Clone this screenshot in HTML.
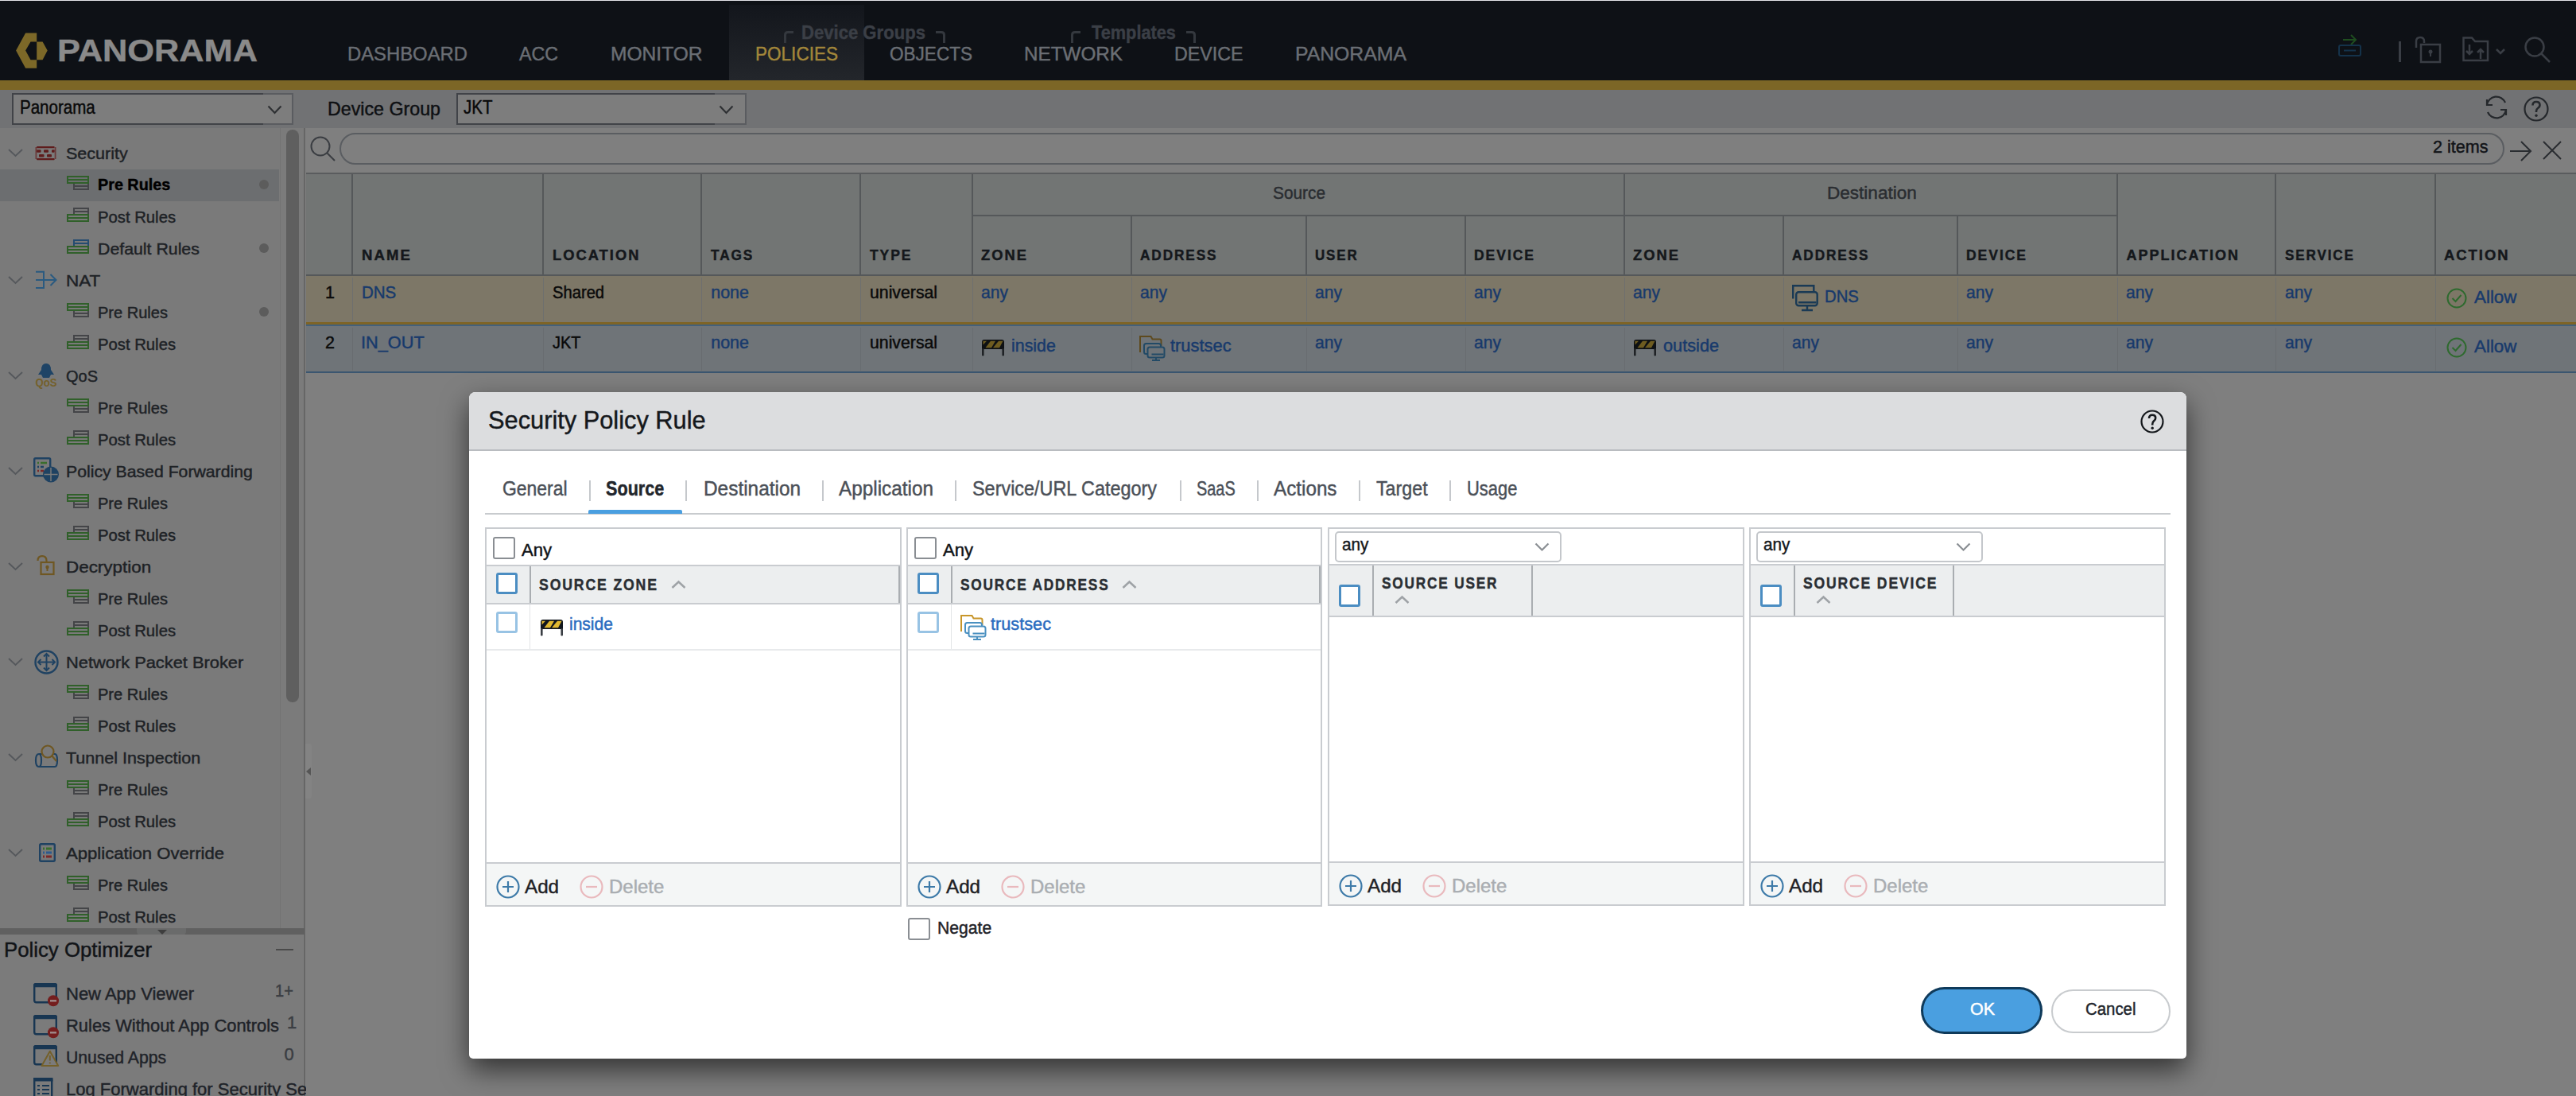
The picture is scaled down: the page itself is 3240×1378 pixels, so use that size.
<!DOCTYPE html><html><head><meta charset="utf-8"><style>
html,body{margin:0;padding:0;width:3240px;height:1378px;overflow:hidden;background:#7f7f7f;}
body{position:relative;font-family:"Liberation Sans", sans-serif;}
.t{position:absolute;line-height:1;white-space:nowrap;-webkit-text-stroke:0.45px currentColor;}
svg{overflow:visible}
</style></head><body>
<div style="position:absolute;left:0px;top:0px;width:3240px;height:101px;background:#0e1116"></div>
<div style="position:absolute;left:0px;top:0px;width:3240px;height:1px;background:#e6e5ea"></div>
<div style="position:absolute;left:917px;top:6px;width:170px;height:95px;background:linear-gradient(#13161c,#23262b)"></div>
<svg style="position:absolute;left:0px;top:0px" width="80" height="100" viewBox="0 0 80 100"><path d="M32.1 41.6 H46.2 V52.4 H38.5 L32.1 63.6 L38.5 75.3 H46.2 V85.8 H32.1 L20.1 63.6 Z M46.2 52.4 H53.6 L59.7 63.6 L53.6 75.3 H46.2 Z" fill="#7c6828"/></svg>
<div class="t" style="left:72.0px;top:45.4px;font-size:38px;color:#8a8a8a;font-weight:bold;letter-spacing:0px;transform:scaleX(1.1403);transform-origin:0 0;">PANORAMA</div>
<div class="t" style="left:437.0px;top:56.3px;font-size:24.5px;color:#6a6e74;font-weight:normal;letter-spacing:0px;transform:scaleX(0.9726);transform-origin:0 0;">DASHBOARD</div>
<div class="t" style="left:653.4px;top:56.3px;font-size:24.5px;color:#6a6e74;font-weight:normal;letter-spacing:0px;transform:scaleX(0.9469);transform-origin:0 0;">ACC</div>
<div class="t" style="left:768.4px;top:56.3px;font-size:24.5px;color:#6a6e74;font-weight:normal;letter-spacing:0px;transform:scaleX(1.0030);transform-origin:0 0;">MONITOR</div>
<div class="t" style="left:1119.0px;top:56.3px;font-size:24.5px;color:#6a6e74;font-weight:normal;letter-spacing:0px;transform:scaleX(0.9204);transform-origin:0 0;">OBJECTS</div>
<div class="t" style="left:1288.0px;top:56.3px;font-size:24.5px;color:#6a6e74;font-weight:normal;letter-spacing:0px;transform:scaleX(0.9900);transform-origin:0 0;">NETWORK</div>
<div class="t" style="left:1477.0px;top:56.3px;font-size:24.5px;color:#6a6e74;font-weight:normal;letter-spacing:0px;transform:scaleX(0.9490);transform-origin:0 0;">DEVICE</div>
<div class="t" style="left:1628.8px;top:56.3px;font-size:24.5px;color:#6a6e74;font-weight:normal;letter-spacing:0px;transform:scaleX(1.0108);transform-origin:0 0;">PANORAMA</div>
<div class="t" style="left:949.8px;top:56.3px;font-size:24.5px;color:#a3873a;font-weight:normal;letter-spacing:0px;transform:scaleX(0.9204);transform-origin:0 0;">POLICIES</div>
<div class="t" style="left:1007.7px;top:28.7px;font-size:24px;color:#3b3f46;font-weight:bold;letter-spacing:0px;transform:scaleX(0.9204);transform-origin:0 0;">Device Groups</div>
<div class="t" style="left:1372.6px;top:28.7px;font-size:24px;color:#3b3f46;font-weight:bold;letter-spacing:0px;transform:scaleX(0.9060);transform-origin:0 0;">Templates</div>
<svg style="position:absolute;left:986px;top:39px" width="13" height="15" viewBox="0 0 13 15"><path d="M1.5 15 V5 Q1.5 1.5 5 1.5 H12" stroke="#34383e" stroke-width="3" fill="none"/></svg>
<svg style="position:absolute;left:1347px;top:39px" width="13" height="15" viewBox="0 0 13 15"><path d="M1.5 15 V5 Q1.5 1.5 5 1.5 H12" stroke="#34383e" stroke-width="3" fill="none"/></svg>
<svg style="position:absolute;left:1176px;top:39px" width="13" height="15" viewBox="0 0 13 15"><path d="M1 1.5 H8 Q11.5 1.5 11.5 5 V15" stroke="#34383e" stroke-width="3" fill="none"/></svg>
<svg style="position:absolute;left:1491px;top:39px" width="13" height="15" viewBox="0 0 13 15"><path d="M1 1.5 H8 Q11.5 1.5 11.5 5 V15" stroke="#34383e" stroke-width="3" fill="none"/></svg>
<svg style="position:absolute;left:2941px;top:42px" width="30" height="30" viewBox="0 0 30 30"><path d="M6 8 H22 M16 2 L22 8 L16 14" stroke="#1f4d1f" stroke-width="2" fill="none"/><rect x="1" y="15" width="27" height="13" rx="2" stroke="#14324a" stroke-width="2" fill="none"/><path d="M7 21.5 H22" stroke="#14324a" stroke-width="2"/></svg>
<div style="position:absolute;left:3017px;top:52px;width:3px;height:26px;background:#3a3e45"></div>
<svg style="position:absolute;left:3037px;top:46px" width="34" height="34" viewBox="0 0 34 34"><path d="M2 14 V6 Q2 1 7 1 Q12 1 12 6 V8" stroke="#3a3e45" stroke-width="2.5" fill="none"/><rect x="8" y="10" width="24" height="22" stroke="#3a3e45" stroke-width="2.5" fill="none"/><circle cx="20" cy="19" r="2.5" fill="#3a3e45"/><rect x="19" y="19" width="2" height="6" fill="#3a3e45"/></svg>
<svg style="position:absolute;left:3097px;top:46px" width="56" height="32" viewBox="0 0 56 32"><path d="M1.5 30 V1.5 H12 L16 6 H32 V30 Z" stroke="#3a3e45" stroke-width="2.5" fill="none"/><path d="M9 10 V22 M5 18 L9 22 L13 18 M23 28 V16 M19 20 L23 16 L27 20" stroke="#3a3e45" stroke-width="2.5" fill="none"/><path d="M43 16 L48 21 L53 16" stroke="#3a3e45" stroke-width="2.5" fill="none"/></svg>
<svg style="position:absolute;left:3175px;top:46px" width="34" height="34" viewBox="0 0 34 34"><circle cx="13" cy="13" r="11.5" stroke="#3a3e45" stroke-width="2.5" fill="none"/><path d="M21 21 L32 32" stroke="#3a3e45" stroke-width="2.5"/></svg>
<div style="position:absolute;left:0px;top:101px;width:3240px;height:12px;background:#7c6626"></div>
<div style="position:absolute;left:0px;top:113px;width:3240px;height:48px;background:#717274"></div>
<div style="position:absolute;left:15px;top:117px;width:354px;height:40px;background:#7d7d7d;border:2px solid #414348;box-sizing:border-box"></div>
<div style="position:absolute;left:331px;top:117px;width:38px;height:40px;border:2px solid #5a5c60;border-left:none;box-sizing:border-box"></div>
<div class="t" style="left:24.8px;top:124.0px;font-size:23px;color:#0a0a0a;font-weight:normal;letter-spacing:0px;transform:scaleX(0.8922);transform-origin:0 0;">Panorama</div>
<svg style="position:absolute;left:336px;top:132px" width="20" height="12" viewBox="0 0 20 12"><path d="M1.5 1.5 L9.5 10 L17.5 1.5" stroke="#2e3033" stroke-width="2.2" fill="none"/></svg>
<div class="t" style="left:412.4px;top:124.7px;font-size:24px;color:#0e1013;font-weight:normal;letter-spacing:0px;transform:scaleX(0.9676);transform-origin:0 0;">Device Group</div>
<div style="position:absolute;left:574px;top:117px;width:365px;height:40px;background:#7d7d7d;border:2px solid #414348;box-sizing:border-box"></div>
<div style="position:absolute;left:899px;top:117px;width:40px;height:40px;border:2px solid #5a5c60;border-left:none;box-sizing:border-box"></div>
<div class="t" style="left:583.0px;top:124.0px;font-size:23px;color:#0a0a0a;font-weight:normal;letter-spacing:0px;transform:scaleX(0.8927);transform-origin:0 0;">JKT</div>
<svg style="position:absolute;left:904px;top:132px" width="20" height="12" viewBox="0 0 20 12"><path d="M1.5 1.5 L9.5 10 L17.5 1.5" stroke="#2e3033" stroke-width="2.2" fill="none"/></svg>
<svg style="position:absolute;left:3125px;top:120px" width="30" height="30" viewBox="0 0 30 30"><path d="M3 12 A12 12 0 0 1 26 9 M27 18 A12 12 0 0 1 4 21" stroke="#25282c" stroke-width="2.2" fill="none"/><path d="M3 5 V12 H10 M27 25 V18 H20" stroke="#25282c" stroke-width="2.2" fill="none"/></svg>
<svg style="position:absolute;left:3174px;top:121px" width="32" height="32" viewBox="0 0 32 32"><circle cx="16" cy="16" r="14.5" stroke="#25282c" stroke-width="2.2" fill="none"/><path d="M11.5 11.5 Q11.5 7 16 7 Q20.5 7 20.5 11 Q20.5 13.5 18 15 Q16 16.3 16 19 V20" stroke="#25282c" stroke-width="2.6" fill="none"/><circle cx="16" cy="24.3" r="1.7" fill="#25282c"/></svg>
<div style="position:absolute;left:0px;top:161px;width:352px;height:1007px;background:#7a7a7a"></div>
<div style="position:absolute;left:352px;top:161px;width:31px;height:1007px;background:#7b7b7b"></div>
<div style="position:absolute;left:352px;top:161px;width:1px;height:1007px;background:#727272"></div>
<div style="position:absolute;left:360px;top:163px;width:16px;height:720px;background:#5f5f5f;border-radius:8px"></div>
<div style="position:absolute;left:382px;top:161px;width:2px;height:1217px;background:#666"></div>
<div style="position:absolute;left:0px;top:213px;width:351px;height:40px;background:#6c6e70"></div>
<svg style="position:absolute;left:10px;top:187px" width="19" height="10" viewBox="0 0 19 10"><path d="M1 1 L9.5 9 L18 1" stroke="#55585c" stroke-width="1.8" fill="none"/></svg>
<svg style="position:absolute;left:44px;top:183px" width="27" height="20" viewBox="0 0 27 20"><g fill="#5e1c1c"><rect x="2" y="1" width="22.7" height="2.3" rx="1"/><rect x="2" y="16" width="22.7" height="2.3" rx="1"/><rect x="2" y="5.3" width="5.5" height="3.5" rx="1"/><rect x="11" y="5.3" width="6" height="3.5" rx="1"/><rect x="21" y="5.3" width="3.7" height="3.5" rx="1"/><rect x="5" y="11" width="6.5" height="3.5" rx="1"/><rect x="15" y="11" width="6" height="3.5" rx="1"/></g><rect x="0.5" y="2" width="1.8" height="15" fill="#6a3a3a"/><rect x="24.7" y="2" width="1.8" height="15" fill="#6a3a3a"/></svg>
<div class="t" style="left:83.2px;top:181.6px;font-size:21px;color:#1e2226;font-weight:normal;letter-spacing:0px;transform:scaleX(1.0257);transform-origin:0 0;">Security</div>
<svg style="position:absolute;left:84px;top:221px" width="28" height="18" viewBox="0 0 28 18"><rect x="9" y="9" width="18" height="8" stroke="#444548" stroke-width="2" fill="none"/><path d="M8 13 H28" stroke="#444548" stroke-width="2"/><rect x="1" y="1" width="26" height="8" stroke="#30602a" stroke-width="2" fill="none"/><path d="M0 5 H28" stroke="#30602a" stroke-width="2"/></svg>
<div class="t" style="left:122.7px;top:221.4px;font-size:21px;color:#000;font-weight:bold;letter-spacing:0px;transform:scaleX(0.9412);transform-origin:0 0;">Pre Rules</div>
<div style="position:absolute;left:326px;top:226px;width:12px;height:12px;background:#5c5c5c;border-radius:50%"></div>
<svg style="position:absolute;left:84px;top:261px" width="28" height="18" viewBox="0 0 28 18"><rect x="9" y="1" width="18" height="8" stroke="#444548" stroke-width="2" fill="none"/><path d="M8 5 H28" stroke="#444548" stroke-width="2"/><rect x="1" y="9" width="26" height="8" stroke="#30602a" stroke-width="2" fill="none"/><path d="M0 13 H28" stroke="#30602a" stroke-width="2"/></svg>
<div class="t" style="left:123.0px;top:261.6px;font-size:21px;color:#1e2226;font-weight:normal;letter-spacing:0px;transform:scaleX(0.9655);transform-origin:0 0;">Post Rules</div>
<svg style="position:absolute;left:84px;top:301px" width="28" height="18" viewBox="0 0 28 18"><rect x="9" y="1" width="18" height="8" stroke="#254c70" stroke-width="2" fill="none"/><path d="M8 5 H28" stroke="#254c70" stroke-width="2"/><rect x="1" y="9" width="26" height="8" stroke="#30602a" stroke-width="2" fill="none"/><path d="M0 13 H28" stroke="#30602a" stroke-width="2"/></svg>
<div class="t" style="left:123.0px;top:301.6px;font-size:21px;color:#1e2226;font-weight:normal;letter-spacing:0px;transform:scaleX(1.0143);transform-origin:0 0;">Default Rules</div>
<div style="position:absolute;left:326px;top:306px;width:12px;height:12px;background:#5c5c5c;border-radius:50%"></div>
<svg style="position:absolute;left:10px;top:347px" width="19" height="10" viewBox="0 0 19 10"><path d="M1 1 L9.5 9 L18 1" stroke="#55585c" stroke-width="1.8" fill="none"/></svg>
<svg style="position:absolute;left:44px;top:340px" width="28" height="24" viewBox="0 0 28 24"><path d="M1 1.8 H11 V22 H1 M1 12 H26 M19.5 5 L26.5 12 L19.5 19" stroke="#2a5a80" stroke-width="2" fill="none"/></svg>
<div class="t" style="left:83.2px;top:341.6px;font-size:21px;color:#1e2226;font-weight:normal;letter-spacing:0px;transform:scaleX(1.0716);transform-origin:0 0;">NAT</div>
<svg style="position:absolute;left:84px;top:381px" width="28" height="18" viewBox="0 0 28 18"><rect x="9" y="9" width="18" height="8" stroke="#444548" stroke-width="2" fill="none"/><path d="M8 13 H28" stroke="#444548" stroke-width="2"/><rect x="1" y="1" width="26" height="8" stroke="#30602a" stroke-width="2" fill="none"/><path d="M0 5 H28" stroke="#30602a" stroke-width="2"/></svg>
<div class="t" style="left:123.0px;top:381.6px;font-size:21px;color:#1e2226;font-weight:normal;letter-spacing:0px;transform:scaleX(0.9539);transform-origin:0 0;">Pre Rules</div>
<div style="position:absolute;left:326px;top:386px;width:12px;height:12px;background:#5c5c5c;border-radius:50%"></div>
<svg style="position:absolute;left:84px;top:421px" width="28" height="18" viewBox="0 0 28 18"><rect x="9" y="1" width="18" height="8" stroke="#444548" stroke-width="2" fill="none"/><path d="M8 5 H28" stroke="#444548" stroke-width="2"/><rect x="1" y="9" width="26" height="8" stroke="#30602a" stroke-width="2" fill="none"/><path d="M0 13 H28" stroke="#30602a" stroke-width="2"/></svg>
<div class="t" style="left:123.0px;top:421.6px;font-size:21px;color:#1e2226;font-weight:normal;letter-spacing:0px;transform:scaleX(0.9655);transform-origin:0 0;">Post Rules</div>
<svg style="position:absolute;left:10px;top:467px" width="19" height="10" viewBox="0 0 19 10"><path d="M1 1 L9.5 9 L18 1" stroke="#55585c" stroke-width="1.8" fill="none"/></svg>
<svg style="position:absolute;left:44px;top:456px" width="28" height="31" viewBox="0 0 28 31"><path d="M8 9 Q8 1 14 1 Q20 1 20 9 L24 15 H4 Z" fill="#1f4466"/><path d="M8 15 L10 19 H18 L20 15 Z" fill="#1f4466"/><text x="14" y="29.5" font-size="14" font-weight="bold" text-anchor="middle" fill="#74602a" font-family="Liberation Sans" textLength="27" lengthAdjust="spacingAndGlyphs">QoS</text></svg>
<div class="t" style="left:83.2px;top:461.6px;font-size:21px;color:#1e2226;font-weight:normal;letter-spacing:0px;transform:scaleX(0.9524);transform-origin:0 0;">QoS</div>
<svg style="position:absolute;left:84px;top:501px" width="28" height="18" viewBox="0 0 28 18"><rect x="9" y="9" width="18" height="8" stroke="#444548" stroke-width="2" fill="none"/><path d="M8 13 H28" stroke="#444548" stroke-width="2"/><rect x="1" y="1" width="26" height="8" stroke="#30602a" stroke-width="2" fill="none"/><path d="M0 5 H28" stroke="#30602a" stroke-width="2"/></svg>
<div class="t" style="left:123.0px;top:501.6px;font-size:21px;color:#1e2226;font-weight:normal;letter-spacing:0px;transform:scaleX(0.9539);transform-origin:0 0;">Pre Rules</div>
<svg style="position:absolute;left:84px;top:541px" width="28" height="18" viewBox="0 0 28 18"><rect x="9" y="1" width="18" height="8" stroke="#444548" stroke-width="2" fill="none"/><path d="M8 5 H28" stroke="#444548" stroke-width="2"/><rect x="1" y="9" width="26" height="8" stroke="#30602a" stroke-width="2" fill="none"/><path d="M0 13 H28" stroke="#30602a" stroke-width="2"/></svg>
<div class="t" style="left:123.0px;top:541.6px;font-size:21px;color:#1e2226;font-weight:normal;letter-spacing:0px;transform:scaleX(0.9655);transform-origin:0 0;">Post Rules</div>
<svg style="position:absolute;left:10px;top:587px" width="19" height="10" viewBox="0 0 19 10"><path d="M1 1 L9.5 9 L18 1" stroke="#55585c" stroke-width="1.8" fill="none"/></svg>
<svg style="position:absolute;left:42px;top:575px" width="33" height="32" viewBox="0 0 33 32"><rect x="1.2" y="1.2" width="20" height="22" rx="1.5" stroke="#1f4262" stroke-width="2.4" fill="none"/><path d="M5 7 H7 M9 7 H17" stroke="#3a6e2c" stroke-width="2.5"/><path d="M5 12 H7 M9 12 H13" stroke="#1f4262" stroke-width="2.5"/><path d="M5 17 H7 M9 17 H13" stroke="#7a2828" stroke-width="2.5"/><circle cx="22" cy="21.5" r="10" fill="#1f4262"/><path d="M22 13 V30 M13.5 21.5 H30.5" stroke="#7a7a7a" stroke-width="1.5"/></svg>
<div class="t" style="left:83.2px;top:581.6px;font-size:21px;color:#1e2226;font-weight:normal;letter-spacing:0px;transform:scaleX(1.0110);transform-origin:0 0;">Policy Based Forwarding</div>
<svg style="position:absolute;left:84px;top:621px" width="28" height="18" viewBox="0 0 28 18"><rect x="9" y="9" width="18" height="8" stroke="#444548" stroke-width="2" fill="none"/><path d="M8 13 H28" stroke="#444548" stroke-width="2"/><rect x="1" y="1" width="26" height="8" stroke="#30602a" stroke-width="2" fill="none"/><path d="M0 5 H28" stroke="#30602a" stroke-width="2"/></svg>
<div class="t" style="left:123.0px;top:621.6px;font-size:21px;color:#1e2226;font-weight:normal;letter-spacing:0px;transform:scaleX(0.9539);transform-origin:0 0;">Pre Rules</div>
<svg style="position:absolute;left:84px;top:661px" width="28" height="18" viewBox="0 0 28 18"><rect x="9" y="1" width="18" height="8" stroke="#444548" stroke-width="2" fill="none"/><path d="M8 5 H28" stroke="#444548" stroke-width="2"/><rect x="1" y="9" width="26" height="8" stroke="#30602a" stroke-width="2" fill="none"/><path d="M0 13 H28" stroke="#30602a" stroke-width="2"/></svg>
<div class="t" style="left:123.0px;top:661.6px;font-size:21px;color:#1e2226;font-weight:normal;letter-spacing:0px;transform:scaleX(0.9655);transform-origin:0 0;">Post Rules</div>
<svg style="position:absolute;left:10px;top:707px" width="19" height="10" viewBox="0 0 19 10"><path d="M1 1 L9.5 9 L18 1" stroke="#55585c" stroke-width="1.8" fill="none"/></svg>
<svg style="position:absolute;left:46px;top:698px" width="23" height="26" viewBox="0 0 23 26"><path d="M1.5 7 Q1.5 1.2 7 1.2 Q12.5 1.2 12.5 7 V9" stroke="#6f5722" stroke-width="2.2" fill="none"/><rect x="5.5" y="9" width="16" height="15" stroke="#6f5722" stroke-width="2.2" fill="none"/><circle cx="13.5" cy="15" r="2.2" fill="#6f5722"/><rect x="12.5" y="15" width="2" height="5" fill="#6f5722"/></svg>
<div class="t" style="left:83.2px;top:701.6px;font-size:21px;color:#1e2226;font-weight:normal;letter-spacing:0px;transform:scaleX(1.0677);transform-origin:0 0;">Decryption</div>
<svg style="position:absolute;left:84px;top:741px" width="28" height="18" viewBox="0 0 28 18"><rect x="9" y="9" width="18" height="8" stroke="#444548" stroke-width="2" fill="none"/><path d="M8 13 H28" stroke="#444548" stroke-width="2"/><rect x="1" y="1" width="26" height="8" stroke="#30602a" stroke-width="2" fill="none"/><path d="M0 5 H28" stroke="#30602a" stroke-width="2"/></svg>
<div class="t" style="left:123.0px;top:741.6px;font-size:21px;color:#1e2226;font-weight:normal;letter-spacing:0px;transform:scaleX(0.9539);transform-origin:0 0;">Pre Rules</div>
<svg style="position:absolute;left:84px;top:781px" width="28" height="18" viewBox="0 0 28 18"><rect x="9" y="1" width="18" height="8" stroke="#444548" stroke-width="2" fill="none"/><path d="M8 5 H28" stroke="#444548" stroke-width="2"/><rect x="1" y="9" width="26" height="8" stroke="#30602a" stroke-width="2" fill="none"/><path d="M0 13 H28" stroke="#30602a" stroke-width="2"/></svg>
<div class="t" style="left:123.0px;top:781.6px;font-size:21px;color:#1e2226;font-weight:normal;letter-spacing:0px;transform:scaleX(0.9655);transform-origin:0 0;">Post Rules</div>
<svg style="position:absolute;left:10px;top:827px" width="19" height="10" viewBox="0 0 19 10"><path d="M1 1 L9.5 9 L18 1" stroke="#55585c" stroke-width="1.8" fill="none"/></svg>
<svg style="position:absolute;left:43px;top:817px" width="31" height="31" viewBox="0 0 31 31"><circle cx="15.5" cy="15.5" r="14" stroke="#1f4262" stroke-width="2.4" fill="none"/><path d="M15.5 5 V26 M5 15.5 H26" stroke="#1f4262" stroke-width="2" fill="none"/><path d="M12 8.5 L15.5 5 L19 8.5 M12 22.5 L15.5 26 L19 22.5 M8.5 12 L5 15.5 L8.5 19 M22.5 12 L26 15.5 L22.5 19" stroke="#1f4262" stroke-width="2" fill="none"/></svg>
<div class="t" style="left:83.2px;top:821.6px;font-size:21px;color:#1e2226;font-weight:normal;letter-spacing:0px;transform:scaleX(1.0398);transform-origin:0 0;">Network Packet Broker</div>
<svg style="position:absolute;left:84px;top:861px" width="28" height="18" viewBox="0 0 28 18"><rect x="9" y="9" width="18" height="8" stroke="#444548" stroke-width="2" fill="none"/><path d="M8 13 H28" stroke="#444548" stroke-width="2"/><rect x="1" y="1" width="26" height="8" stroke="#30602a" stroke-width="2" fill="none"/><path d="M0 5 H28" stroke="#30602a" stroke-width="2"/></svg>
<div class="t" style="left:123.0px;top:861.6px;font-size:21px;color:#1e2226;font-weight:normal;letter-spacing:0px;transform:scaleX(0.9539);transform-origin:0 0;">Pre Rules</div>
<svg style="position:absolute;left:84px;top:901px" width="28" height="18" viewBox="0 0 28 18"><rect x="9" y="1" width="18" height="8" stroke="#444548" stroke-width="2" fill="none"/><path d="M8 5 H28" stroke="#444548" stroke-width="2"/><rect x="1" y="9" width="26" height="8" stroke="#30602a" stroke-width="2" fill="none"/><path d="M0 13 H28" stroke="#30602a" stroke-width="2"/></svg>
<div class="t" style="left:123.0px;top:901.6px;font-size:21px;color:#1e2226;font-weight:normal;letter-spacing:0px;transform:scaleX(0.9655);transform-origin:0 0;">Post Rules</div>
<svg style="position:absolute;left:10px;top:947px" width="19" height="10" viewBox="0 0 19 10"><path d="M1 1 L9.5 9 L18 1" stroke="#55585c" stroke-width="1.8" fill="none"/></svg>
<svg style="position:absolute;left:43px;top:936px" width="31" height="30" viewBox="0 0 31 30"><path d="M6 12 H26 Q29 12 29 20 Q29 28 26 28 H6 Q2 28 2 20 Q2 12 6 12 Z M6 12 Q9 12 9 20 Q9 28 6 28" stroke="#1f4262" stroke-width="2.2" fill="none"/><circle cx="17" cy="9" r="7.5" stroke="#6f5722" stroke-width="2.2" fill="#7a7a7a"/><path d="M22 14 L28 21" stroke="#6f5722" stroke-width="2.2"/></svg>
<div class="t" style="left:83.2px;top:941.6px;font-size:21px;color:#1e2226;font-weight:normal;letter-spacing:0px;transform:scaleX(1.0261);transform-origin:0 0;">Tunnel Inspection</div>
<svg style="position:absolute;left:84px;top:981px" width="28" height="18" viewBox="0 0 28 18"><rect x="9" y="9" width="18" height="8" stroke="#444548" stroke-width="2" fill="none"/><path d="M8 13 H28" stroke="#444548" stroke-width="2"/><rect x="1" y="1" width="26" height="8" stroke="#30602a" stroke-width="2" fill="none"/><path d="M0 5 H28" stroke="#30602a" stroke-width="2"/></svg>
<div class="t" style="left:123.0px;top:981.6px;font-size:21px;color:#1e2226;font-weight:normal;letter-spacing:0px;transform:scaleX(0.9539);transform-origin:0 0;">Pre Rules</div>
<svg style="position:absolute;left:84px;top:1021px" width="28" height="18" viewBox="0 0 28 18"><rect x="9" y="1" width="18" height="8" stroke="#444548" stroke-width="2" fill="none"/><path d="M8 5 H28" stroke="#444548" stroke-width="2"/><rect x="1" y="9" width="26" height="8" stroke="#30602a" stroke-width="2" fill="none"/><path d="M0 13 H28" stroke="#30602a" stroke-width="2"/></svg>
<div class="t" style="left:123.0px;top:1021.6px;font-size:21px;color:#1e2226;font-weight:normal;letter-spacing:0px;transform:scaleX(0.9655);transform-origin:0 0;">Post Rules</div>
<svg style="position:absolute;left:10px;top:1067px" width="19" height="10" viewBox="0 0 19 10"><path d="M1 1 L9.5 9 L18 1" stroke="#55585c" stroke-width="1.8" fill="none"/></svg>
<svg style="position:absolute;left:49px;top:1060px" width="21" height="24" viewBox="0 0 21 24"><rect x="1.2" y="1.2" width="18.6" height="21.6" rx="1.5" stroke="#1f4262" stroke-width="2.4" fill="none"/><path d="M5 7 H7 M9 7 H16" stroke="#3a6e2c" stroke-width="2.8"/><path d="M5 12 H7 M9 12 H16" stroke="#2c5a8e" stroke-width="2.8"/><path d="M5 17 H7 M9 17 H16" stroke="#7a2828" stroke-width="2.8"/></svg>
<div class="t" style="left:83.2px;top:1061.6px;font-size:21px;color:#1e2226;font-weight:normal;letter-spacing:0px;transform:scaleX(1.0529);transform-origin:0 0;">Application Override</div>
<svg style="position:absolute;left:84px;top:1101px" width="28" height="18" viewBox="0 0 28 18"><rect x="9" y="9" width="18" height="8" stroke="#444548" stroke-width="2" fill="none"/><path d="M8 13 H28" stroke="#444548" stroke-width="2"/><rect x="1" y="1" width="26" height="8" stroke="#30602a" stroke-width="2" fill="none"/><path d="M0 5 H28" stroke="#30602a" stroke-width="2"/></svg>
<div class="t" style="left:123.0px;top:1101.6px;font-size:21px;color:#1e2226;font-weight:normal;letter-spacing:0px;transform:scaleX(0.9539);transform-origin:0 0;">Pre Rules</div>
<svg style="position:absolute;left:84px;top:1141px" width="28" height="18" viewBox="0 0 28 18"><rect x="9" y="1" width="18" height="8" stroke="#444548" stroke-width="2" fill="none"/><path d="M8 5 H28" stroke="#444548" stroke-width="2"/><rect x="1" y="9" width="26" height="8" stroke="#30602a" stroke-width="2" fill="none"/><path d="M0 13 H28" stroke="#30602a" stroke-width="2"/></svg>
<div class="t" style="left:123.0px;top:1141.6px;font-size:21px;color:#1e2226;font-weight:normal;letter-spacing:0px;transform:scaleX(0.9655);transform-origin:0 0;">Post Rules</div>
<div style="position:absolute;left:0px;top:1167px;width:383px;height:8px;background:#606060"></div>
<div style="position:absolute;left:172px;top:1167px;width:62px;height:10px;background:#6a6b6b;border-radius:0 0 6px 6px"></div>
<svg style="position:absolute;left:193px;top:1168px" width="22" height="7" viewBox="0 0 22 7"><path d="M5 1 L11 7 L17 1 Z" fill="#3e3e3e"/></svg>
<div style="position:absolute;left:0px;top:1175px;width:381px;height:203px;background:#7b7b7b"></div>
<div class="t" style="left:4.6px;top:1181.8px;font-size:25px;color:#111418;font-weight:normal;letter-spacing:0px;transform:scaleX(1.0305);transform-origin:0 0;">Policy Optimizer</div>
<div style="position:absolute;left:347px;top:1193px;width:22px;height:2px;background:#4a4a4a"></div>
<svg style="position:absolute;left:42px;top:1235.5px" width="33" height="34" viewBox="0 0 33 34"><rect x="1.2" y="1.2" width="27.6" height="23" rx="2.5" stroke="#183652" stroke-width="2.4" fill="none"/><rect x="0" y="0" width="30" height="5.2" rx="2.5" fill="#183652"/><circle cx="25" cy="22.3" r="7" fill="#741e1e"/><path d="M21 22.3 H29" stroke="#a08a8a" stroke-width="2.4"/></svg>
<div class="t" style="left:83.0px;top:1238.9px;font-size:22px;color:#1f2329;font-weight:normal;letter-spacing:0px;">New App Viewer</div>
<div class="t" style="left:346.0px;top:1234.9px;font-size:22px;color:#3a3d42;font-weight:normal;letter-spacing:0px;transform:scaleX(0.9120);transform-origin:0 0;">1+</div>
<svg style="position:absolute;left:42px;top:1275.5px" width="33" height="34" viewBox="0 0 33 34"><rect x="1.2" y="1.2" width="27.6" height="23" rx="2.5" stroke="#183652" stroke-width="2.4" fill="none"/><rect x="0" y="0" width="30" height="5.2" rx="2.5" fill="#183652"/><circle cx="25" cy="22.3" r="7" fill="#741e1e"/><path d="M21 22.3 H29" stroke="#a08a8a" stroke-width="2.4"/></svg>
<div class="t" style="left:83.0px;top:1278.9px;font-size:22px;color:#1f2329;font-weight:normal;letter-spacing:0px;transform:scaleX(0.9963);transform-origin:0 0;">Rules Without App Controls</div>
<div class="t" style="left:361.0px;top:1274.9px;font-size:22px;color:#3a3d42;font-weight:normal;letter-spacing:0px;">1</div>
<svg style="position:absolute;left:42px;top:1314px" width="33" height="34" viewBox="0 0 33 34"><rect x="1.2" y="1.2" width="27.6" height="23" rx="2.5" stroke="#183652" stroke-width="2.4" fill="none"/><rect x="0" y="0" width="30" height="5.2" rx="2.5" fill="#183652"/><path d="M20.8 7.7 L31.2 26 H10.5 Z" stroke="#74602a" stroke-width="2" fill="#7b7b7b" stroke-linejoin="round"/><path d="M20.8 13 V19.5" stroke="#74602a" stroke-width="2"/><circle cx="20.8" cy="22.5" r="1.1" fill="#74602a"/></svg>
<div class="t" style="left:83.0px;top:1318.9px;font-size:22px;color:#1f2329;font-weight:normal;letter-spacing:0px;transform:scaleX(0.9637);transform-origin:0 0;">Unused Apps</div>
<div class="t" style="left:357.5px;top:1314.9px;font-size:22px;color:#3a3d42;font-weight:normal;letter-spacing:0px;">0</div>
<svg style="position:absolute;left:42px;top:1355px" width="36" height="30" viewBox="0 0 36 30"><rect x="1.2" y="1.2" width="22" height="28" rx="1.5" stroke="#183652" stroke-width="2.4" fill="none"/><rect x="0" y="0" width="24.5" height="4.5" fill="#183652"/><path d="M5 10 H8 M11 10 H20 M5 15 H8 M11 15 H20 M5 20 H8 M11 20 H20" stroke="#183652" stroke-width="2.2"/><path d="M13 28 H33 M29 24.5 L33 28" stroke="#2e6a2a" stroke-width="2"/></svg>
<div class="t" style="left:83.0px;top:1358.9px;font-size:22px;color:#1f2329;font-weight:normal;letter-spacing:0px;">Log Forwarding for Security Ser</div>
<div style="position:absolute;left:385px;top:161px;width:2855px;height:57px;background:#7f7f7f"></div>
<svg style="position:absolute;left:390px;top:171px" width="32" height="32" viewBox="0 0 32 32"><circle cx="13" cy="13" r="11.5" stroke="#3a3d42" stroke-width="2" fill="none"/><path d="M21.5 21.5 L31 31" stroke="#3a3d42" stroke-width="2"/></svg>
<div style="position:absolute;left:427px;top:167px;width:2723px;height:40px;border:2px solid #5a5d61;border-radius:20px;box-sizing:border-box;background:#7f7f7f"></div>
<div class="t" style="left:3059.7px;top:174.4px;font-size:22px;color:#121418;font-weight:normal;letter-spacing:0px;transform:scaleX(0.9817);transform-origin:0 0;">2 items</div>
<svg style="position:absolute;left:3156px;top:177px" width="28" height="26" viewBox="0 0 28 26"><path d="M1 13 H27 M15 1 L27 13 L15 25" stroke="#2a2d31" stroke-width="2" fill="none"/></svg>
<svg style="position:absolute;left:3198px;top:177px" width="24" height="24" viewBox="0 0 24 24"><path d="M1 1 L23 23 M23 1 L1 23" stroke="#2a2d31" stroke-width="2" fill="none"/></svg>
<div style="position:absolute;left:385px;top:217px;width:2855px;height:2px;background:#5a5c5e"></div>
<div style="position:absolute;left:385px;top:219px;width:2855px;height:126px;background:#727574"></div>
<div style="position:absolute;left:385px;top:345px;width:2855px;height:2px;background:#55585a"></div>
<div style="position:absolute;left:385px;top:347px;width:2855px;height:58px;background:#7d7767"></div>
<div style="position:absolute;left:385px;top:405px;width:2855px;height:3px;background:#7e6426"></div>
<div style="position:absolute;left:385px;top:408px;width:2855px;height:2px;background:#43607a"></div>
<div style="position:absolute;left:385px;top:410px;width:2855px;height:57px;background:#6f7478"></div>
<div style="position:absolute;left:385px;top:467px;width:2855px;height:2px;background:#3b5670"></div>
<div style="position:absolute;left:385px;top:469px;width:2855px;height:909px;background:#7f7f7f"></div>
<div style="position:absolute;left:442px;top:219px;width:2px;height:126px;background:#55585a"></div>
<div style="position:absolute;left:443px;top:349px;width:1px;height:55px;background:#6e6f6e"></div>
<div style="position:absolute;left:443px;top:412px;width:1px;height:54px;background:#686c70"></div>
<div style="position:absolute;left:682px;top:219px;width:2px;height:126px;background:#55585a"></div>
<div style="position:absolute;left:683px;top:349px;width:1px;height:55px;background:#6e6f6e"></div>
<div style="position:absolute;left:683px;top:412px;width:1px;height:54px;background:#686c70"></div>
<div style="position:absolute;left:881px;top:219px;width:2px;height:126px;background:#55585a"></div>
<div style="position:absolute;left:882px;top:349px;width:1px;height:55px;background:#6e6f6e"></div>
<div style="position:absolute;left:882px;top:412px;width:1px;height:54px;background:#686c70"></div>
<div style="position:absolute;left:1081px;top:219px;width:2px;height:126px;background:#55585a"></div>
<div style="position:absolute;left:1082px;top:349px;width:1px;height:55px;background:#6e6f6e"></div>
<div style="position:absolute;left:1082px;top:412px;width:1px;height:54px;background:#686c70"></div>
<div style="position:absolute;left:1222px;top:219px;width:2px;height:126px;background:#55585a"></div>
<div style="position:absolute;left:1223px;top:349px;width:1px;height:55px;background:#6e6f6e"></div>
<div style="position:absolute;left:1223px;top:412px;width:1px;height:54px;background:#686c70"></div>
<div style="position:absolute;left:1422px;top:271px;width:2px;height:74px;background:#55585a"></div>
<div style="position:absolute;left:1423px;top:349px;width:1px;height:55px;background:#6e6f6e"></div>
<div style="position:absolute;left:1423px;top:412px;width:1px;height:54px;background:#686c70"></div>
<div style="position:absolute;left:1642px;top:271px;width:2px;height:74px;background:#55585a"></div>
<div style="position:absolute;left:1643px;top:349px;width:1px;height:55px;background:#6e6f6e"></div>
<div style="position:absolute;left:1643px;top:412px;width:1px;height:54px;background:#686c70"></div>
<div style="position:absolute;left:1842px;top:271px;width:2px;height:74px;background:#55585a"></div>
<div style="position:absolute;left:1843px;top:349px;width:1px;height:55px;background:#6e6f6e"></div>
<div style="position:absolute;left:1843px;top:412px;width:1px;height:54px;background:#686c70"></div>
<div style="position:absolute;left:2042px;top:219px;width:2px;height:126px;background:#55585a"></div>
<div style="position:absolute;left:2043px;top:349px;width:1px;height:55px;background:#6e6f6e"></div>
<div style="position:absolute;left:2043px;top:412px;width:1px;height:54px;background:#686c70"></div>
<div style="position:absolute;left:2242px;top:271px;width:2px;height:74px;background:#55585a"></div>
<div style="position:absolute;left:2243px;top:349px;width:1px;height:55px;background:#6e6f6e"></div>
<div style="position:absolute;left:2243px;top:412px;width:1px;height:54px;background:#686c70"></div>
<div style="position:absolute;left:2461px;top:271px;width:2px;height:74px;background:#55585a"></div>
<div style="position:absolute;left:2462px;top:349px;width:1px;height:55px;background:#6e6f6e"></div>
<div style="position:absolute;left:2462px;top:412px;width:1px;height:54px;background:#686c70"></div>
<div style="position:absolute;left:2662px;top:219px;width:2px;height:126px;background:#55585a"></div>
<div style="position:absolute;left:2663px;top:349px;width:1px;height:55px;background:#6e6f6e"></div>
<div style="position:absolute;left:2663px;top:412px;width:1px;height:54px;background:#686c70"></div>
<div style="position:absolute;left:2861px;top:219px;width:2px;height:126px;background:#55585a"></div>
<div style="position:absolute;left:2862px;top:349px;width:1px;height:55px;background:#6e6f6e"></div>
<div style="position:absolute;left:2862px;top:412px;width:1px;height:54px;background:#686c70"></div>
<div style="position:absolute;left:3062px;top:219px;width:2px;height:126px;background:#55585a"></div>
<div style="position:absolute;left:3063px;top:349px;width:1px;height:55px;background:#6e6f6e"></div>
<div style="position:absolute;left:3063px;top:412px;width:1px;height:54px;background:#686c70"></div>
<div style="position:absolute;left:1223px;top:270px;width:820px;height:2px;background:#55585a"></div>
<div style="position:absolute;left:2043px;top:270px;width:620px;height:2px;background:#55585a"></div>
<div class="t" style="left:1600.8px;top:232.4px;font-size:22px;color:#2a2d31;font-weight:normal;letter-spacing:0px;transform:scaleX(0.9462);transform-origin:0 0;">Source</div>
<div class="t" style="left:2297.6px;top:232.4px;font-size:22px;color:#2a2d31;font-weight:normal;letter-spacing:0px;transform:scaleX(1.0245);transform-origin:0 0;">Destination</div>
<div class="t" style="left:454.5px;top:312.4px;font-size:18px;color:#15181c;font-weight:bold;letter-spacing:2px;transform:scaleX(1.0305);transform-origin:0 0;">NAME</div>
<div class="t" style="left:694.5px;top:312.4px;font-size:18px;color:#15181c;font-weight:bold;letter-spacing:2px;transform:scaleX(1.0164);transform-origin:0 0;">LOCATION</div>
<div class="t" style="left:894.2px;top:312.4px;font-size:18px;color:#15181c;font-weight:bold;letter-spacing:2px;transform:scaleX(0.9571);transform-origin:0 0;">TAGS</div>
<div class="t" style="left:1093.9px;top:312.4px;font-size:18px;color:#15181c;font-weight:bold;letter-spacing:2px;transform:scaleX(0.9698);transform-origin:0 0;">TYPE</div>
<div class="t" style="left:1233.9px;top:312.4px;font-size:18px;color:#15181c;font-weight:bold;letter-spacing:2px;transform:scaleX(1.0179);transform-origin:0 0;">ZONE</div>
<div class="t" style="left:1434.0px;top:312.4px;font-size:18px;color:#15181c;font-weight:bold;letter-spacing:2px;transform:scaleX(0.9550);transform-origin:0 0;">ADDRESS</div>
<div class="t" style="left:1654.0px;top:312.4px;font-size:18px;color:#15181c;font-weight:bold;letter-spacing:2px;transform:scaleX(0.9393);transform-origin:0 0;">USER</div>
<div class="t" style="left:1854.4px;top:312.4px;font-size:18px;color:#15181c;font-weight:bold;letter-spacing:2px;transform:scaleX(0.9740);transform-origin:0 0;">DEVICE</div>
<div class="t" style="left:2054.0px;top:312.4px;font-size:18px;color:#15181c;font-weight:bold;letter-spacing:2px;transform:scaleX(1.0179);transform-origin:0 0;">ZONE</div>
<div class="t" style="left:2254.0px;top:312.4px;font-size:18px;color:#15181c;font-weight:bold;letter-spacing:2px;transform:scaleX(0.9550);transform-origin:0 0;">ADDRESS</div>
<div class="t" style="left:2473.0px;top:312.4px;font-size:18px;color:#15181c;font-weight:bold;letter-spacing:2px;transform:scaleX(0.9740);transform-origin:0 0;">DEVICE</div>
<div class="t" style="left:2674.4px;top:312.4px;font-size:18px;color:#15181c;font-weight:bold;letter-spacing:2px;">APPLICATION</div>
<div class="t" style="left:2873.7px;top:312.4px;font-size:18px;color:#15181c;font-weight:bold;letter-spacing:2px;transform:scaleX(0.9477);transform-origin:0 0;">SERVICE</div>
<div class="t" style="left:3074.0px;top:312.4px;font-size:18px;color:#15181c;font-weight:bold;letter-spacing:2px;transform:scaleX(1.0203);transform-origin:0 0;">ACTION</div>
<div class="t" style="left:409.0px;top:358.4px;font-size:21.5px;color:#0a0a0a;font-weight:normal;letter-spacing:0px;">1</div>
<div class="t" style="left:409.0px;top:420.8px;font-size:21.5px;color:#0a0a0a;font-weight:normal;letter-spacing:0px;">2</div>
<div class="t" style="left:455.3px;top:358.4px;font-size:21.5px;color:#183a6c;font-weight:normal;letter-spacing:0px;transform:scaleX(0.9538);transform-origin:0 0;">DNS</div>
<div class="t" style="left:454.0px;top:420.8px;font-size:21.5px;color:#183a6c;font-weight:normal;letter-spacing:0px;transform:scaleX(1.0108);transform-origin:0 0;">IN_OUT</div>
<div class="t" style="left:694.5px;top:358.4px;font-size:21.5px;color:#0a0a0a;font-weight:normal;letter-spacing:0px;transform:scaleX(0.9386);transform-origin:0 0;">Shared</div>
<div class="t" style="left:694.5px;top:420.8px;font-size:21.5px;color:#0a0a0a;font-weight:normal;letter-spacing:0px;transform:scaleX(0.9281);transform-origin:0 0;">JKT</div>
<div class="t" style="left:894.2px;top:358.4px;font-size:21.5px;color:#183a6c;font-weight:normal;letter-spacing:0px;">none</div>
<div class="t" style="left:894.2px;top:420.8px;font-size:21.5px;color:#183a6c;font-weight:normal;letter-spacing:0px;">none</div>
<div class="t" style="left:1093.9px;top:358.4px;font-size:21.5px;color:#0a0a0a;font-weight:normal;letter-spacing:0px;transform:scaleX(0.9884);transform-origin:0 0;">universal</div>
<div class="t" style="left:1093.9px;top:420.8px;font-size:21.5px;color:#0a0a0a;font-weight:normal;letter-spacing:0px;transform:scaleX(0.9884);transform-origin:0 0;">universal</div>
<div class="t" style="left:1234.0px;top:358.4px;font-size:21.5px;color:#183a6c;font-weight:normal;letter-spacing:0px;transform:scaleX(0.9784);transform-origin:0 0;">any</div>
<div class="t" style="left:1434.0px;top:358.4px;font-size:21.5px;color:#183a6c;font-weight:normal;letter-spacing:0px;transform:scaleX(0.9784);transform-origin:0 0;">any</div>
<div class="t" style="left:1654.0px;top:358.4px;font-size:21.5px;color:#183a6c;font-weight:normal;letter-spacing:0px;transform:scaleX(0.9784);transform-origin:0 0;">any</div>
<div class="t" style="left:1854.4px;top:358.4px;font-size:21.5px;color:#183a6c;font-weight:normal;letter-spacing:0px;transform:scaleX(0.9784);transform-origin:0 0;">any</div>
<div class="t" style="left:2054.0px;top:358.4px;font-size:21.5px;color:#183a6c;font-weight:normal;letter-spacing:0px;transform:scaleX(0.9784);transform-origin:0 0;">any</div>
<div class="t" style="left:2473.0px;top:358.4px;font-size:21.5px;color:#183a6c;font-weight:normal;letter-spacing:0px;transform:scaleX(0.9784);transform-origin:0 0;">any</div>
<div class="t" style="left:2674.4px;top:358.4px;font-size:21.5px;color:#183a6c;font-weight:normal;letter-spacing:0px;transform:scaleX(0.9784);transform-origin:0 0;">any</div>
<div class="t" style="left:2873.7px;top:358.4px;font-size:21.5px;color:#183a6c;font-weight:normal;letter-spacing:0px;transform:scaleX(0.9784);transform-origin:0 0;">any</div>
<div class="t" style="left:1654.0px;top:420.8px;font-size:21.5px;color:#183a6c;font-weight:normal;letter-spacing:0px;transform:scaleX(0.9784);transform-origin:0 0;">any</div>
<div class="t" style="left:1854.4px;top:420.8px;font-size:21.5px;color:#183a6c;font-weight:normal;letter-spacing:0px;transform:scaleX(0.9784);transform-origin:0 0;">any</div>
<div class="t" style="left:2254.0px;top:420.8px;font-size:21.5px;color:#183a6c;font-weight:normal;letter-spacing:0px;transform:scaleX(0.9784);transform-origin:0 0;">any</div>
<div class="t" style="left:2473.0px;top:420.8px;font-size:21.5px;color:#183a6c;font-weight:normal;letter-spacing:0px;transform:scaleX(0.9784);transform-origin:0 0;">any</div>
<div class="t" style="left:2674.4px;top:420.8px;font-size:21.5px;color:#183a6c;font-weight:normal;letter-spacing:0px;transform:scaleX(0.9784);transform-origin:0 0;">any</div>
<div class="t" style="left:2873.7px;top:420.8px;font-size:21.5px;color:#183a6c;font-weight:normal;letter-spacing:0px;transform:scaleX(0.9784);transform-origin:0 0;">any</div>
<svg style="position:absolute;left:1235px;top:427px" width="28" height="21" viewBox="0 0 28 21"><path d="M0 12 V3 Q0 0 3 0 H25 Q28 0 28 3 V12 Z" fill="#0e1114"/><g fill="#6e5c20"><path d="M1.5 1.8 H6 L1.5 6.5 Z"/><path d="M11 1.8 H17 L12 10.3 H4.5 Z"/><path d="M21 1.8 H26.5 L22 10.3 H14 Z"/></g><rect x="0" y="11" width="2.6" height="9.5" rx="1.3" fill="#1f2226"/><rect x="25.4" y="11" width="2.6" height="9.5" rx="1.3" fill="#1f2226"/></svg>
<div class="t" style="left:1271.6px;top:424.6px;font-size:21.5px;color:#183a6c;font-weight:normal;letter-spacing:0px;transform:scaleX(0.9956);transform-origin:0 0;">inside</div>
<svg style="position:absolute;left:1433px;top:422px" width="33" height="32" viewBox="0 0 33 32"><path d="M1 21 V1 H14.5 L16.5 4.5 H25.5 Q27.5 4.5 27.5 6.5 V13" stroke="#5e4a1e" stroke-width="2" fill="none"/><rect x="6" y="10" width="21" height="13" rx="2.5" stroke="#224a66" stroke-width="2" fill="#6f7478"/><rect x="10.5" y="14.5" width="21" height="13" rx="2.5" stroke="#224a66" stroke-width="2" fill="#6f7478"/><path d="M15.5 23.5 H30.5 M21 27.5 V30.5 M16 31 H26" stroke="#224a66" stroke-width="2"/></svg>
<div class="t" style="left:1471.8px;top:424.6px;font-size:21.5px;color:#183a6c;font-weight:normal;letter-spacing:0px;transform:scaleX(1.0179);transform-origin:0 0;">trustsec</div>
<svg style="position:absolute;left:2055px;top:427px" width="28" height="21" viewBox="0 0 28 21"><path d="M0 12 V3 Q0 0 3 0 H25 Q28 0 28 3 V12 Z" fill="#0e1114"/><g fill="#6e5c20"><path d="M1.5 1.8 H6 L1.5 6.5 Z"/><path d="M11 1.8 H17 L12 10.3 H4.5 Z"/><path d="M21 1.8 H26.5 L22 10.3 H14 Z"/></g><rect x="0" y="11" width="2.6" height="9.5" rx="1.3" fill="#1f2226"/><rect x="25.4" y="11" width="2.6" height="9.5" rx="1.3" fill="#1f2226"/></svg>
<div class="t" style="left:2092.0px;top:424.8px;font-size:21.5px;color:#183a6c;font-weight:normal;letter-spacing:0px;transform:scaleX(1.0108);transform-origin:0 0;">outside</div>
<svg style="position:absolute;left:2254px;top:358px" width="34" height="34" viewBox="0 0 34 34"><path d="M1.2 17.5 V1.2 H27.3 V9" stroke="#1a3a55" stroke-width="2.4" fill="none"/><rect x="5.2" y="9.2" width="26.5" height="17" rx="3" stroke="#1a3a55" stroke-width="2.4" fill="#7d7767"/><path d="M8 22.3 H30.5 M19 26.5 V32 M12 32 H26" stroke="#1a3a55" stroke-width="2.4" fill="none"/></svg>
<div class="t" style="left:2295.4px;top:362.5px;font-size:21.5px;color:#183a6c;font-weight:normal;letter-spacing:0px;transform:scaleX(0.9451);transform-origin:0 0;">DNS</div>
<svg style="position:absolute;left:3077px;top:362px" width="26" height="26" viewBox="0 0 26 26"><circle cx="13" cy="13" r="11.5" stroke="#2e6a2e" stroke-width="2" fill="none"/><path d="M7.5 13 L11.5 17 L18.5 9" stroke="#2e6a2e" stroke-width="2" fill="none"/></svg>
<div class="t" style="left:3112.2px;top:364.4px;font-size:21.5px;color:#183a6c;font-weight:normal;letter-spacing:0px;transform:scaleX(1.0408);transform-origin:0 0;">Allow</div>
<svg style="position:absolute;left:3077px;top:424px" width="26" height="26" viewBox="0 0 26 26"><circle cx="13" cy="13" r="11.5" stroke="#2e6a2e" stroke-width="2" fill="none"/><path d="M7.5 13 L11.5 17 L18.5 9" stroke="#2e6a2e" stroke-width="2" fill="none"/></svg>
<div class="t" style="left:3112.2px;top:425.8px;font-size:21.5px;color:#183a6c;font-weight:normal;letter-spacing:0px;transform:scaleX(1.0408);transform-origin:0 0;">Allow</div>
<div style="position:absolute;left:384px;top:935px;width:8px;height:69px;background:#838383;border-radius:0 3px 3px 0"></div>
<svg style="position:absolute;left:384px;top:964px" width="8" height="12" viewBox="0 0 8 12"><path d="M7 1 L1 6 L7 11 Z" fill="#555"/></svg>
<div style="position:absolute;left:590px;top:493px;width:2160px;height:838px;background:#fff;border-radius:8px 8px 5px 5px;box-shadow:0 14px 34px 0 rgba(0,0,0,0.6)"></div>
<div style="position:absolute;left:590px;top:493px;width:2160px;height:72px;background:#dcdddf;border-radius:8px 8px 0 0"></div>
<div style="position:absolute;left:590px;top:565px;width:2160px;height:2px;background:#b9bcc0"></div>
<div class="t" style="left:614.3px;top:511.9px;font-size:32px;color:#15181c;font-weight:normal;letter-spacing:0px;transform:scaleX(0.9617);transform-origin:0 0;">Security Policy Rule</div>
<svg style="position:absolute;left:2692px;top:515px" width="30" height="30" viewBox="0 0 30 30"><circle cx="15" cy="15" r="13.5" stroke="#15181c" stroke-width="2.2" fill="none"/><path d="M11 11 Q11 6.8 15 6.8 Q19.2 6.8 19.2 10.6 Q19.2 13 17 14.4 Q15.2 15.6 15.2 18.5 V19.5" stroke="#15181c" stroke-width="2.6" fill="none"/><circle cx="15.2" cy="23.2" r="1.7" fill="#15181c"/></svg>
<div class="t" style="left:632.0px;top:601.9px;font-size:25.5px;color:#4b5058;font-weight:normal;letter-spacing:0px;transform:scaleX(0.8981);transform-origin:0 0;">General</div>
<div class="t" style="left:762.0px;top:601.9px;font-size:25.5px;color:#22262c;font-weight:bold;letter-spacing:0px;transform:scaleX(0.8486);transform-origin:0 0;">Source</div>
<div class="t" style="left:884.6px;top:601.9px;font-size:25.5px;color:#4b5058;font-weight:normal;letter-spacing:0px;transform:scaleX(0.9569);transform-origin:0 0;">Destination</div>
<div class="t" style="left:1055.0px;top:601.9px;font-size:25.5px;color:#4b5058;font-weight:normal;letter-spacing:0px;transform:scaleX(0.9539);transform-origin:0 0;">Application</div>
<div class="t" style="left:1223.0px;top:601.9px;font-size:25.5px;color:#4b5058;font-weight:normal;letter-spacing:0px;transform:scaleX(0.9179);transform-origin:0 0;">Service/URL Category</div>
<div class="t" style="left:1505.0px;top:601.9px;font-size:25.5px;color:#4b5058;font-weight:normal;letter-spacing:0px;transform:scaleX(0.7808);transform-origin:0 0;">SaaS</div>
<div class="t" style="left:1602.4px;top:601.9px;font-size:25.5px;color:#4b5058;font-weight:normal;letter-spacing:0px;transform:scaleX(0.9504);transform-origin:0 0;">Actions</div>
<div class="t" style="left:1730.6px;top:601.9px;font-size:25.5px;color:#4b5058;font-weight:normal;letter-spacing:0px;transform:scaleX(0.9113);transform-origin:0 0;">Target</div>
<div class="t" style="left:1844.6px;top:601.9px;font-size:25.5px;color:#4b5058;font-weight:normal;letter-spacing:0px;transform:scaleX(0.8597);transform-origin:0 0;">Usage</div>
<div style="position:absolute;left:741px;top:604px;width:2px;height:26px;background:#c5c8cc"></div>
<div style="position:absolute;left:862px;top:604px;width:2px;height:26px;background:#c5c8cc"></div>
<div style="position:absolute;left:1034px;top:604px;width:2px;height:26px;background:#c5c8cc"></div>
<div style="position:absolute;left:1201px;top:604px;width:2px;height:26px;background:#c5c8cc"></div>
<div style="position:absolute;left:1484px;top:604px;width:2px;height:26px;background:#c5c8cc"></div>
<div style="position:absolute;left:1581px;top:604px;width:2px;height:26px;background:#c5c8cc"></div>
<div style="position:absolute;left:1709px;top:604px;width:2px;height:26px;background:#c5c8cc"></div>
<div style="position:absolute;left:1823px;top:604px;width:2px;height:26px;background:#c5c8cc"></div>
<div style="position:absolute;left:610px;top:645px;width:2120px;height:2px;background:#c8cbce"></div>
<div style="position:absolute;left:740px;top:641px;width:118px;height:5px;background:#4a9fe0;border-radius:2px 2px 0 0"></div>
<div style="position:absolute;left:610px;top:663px;width:524px;height:477px;border:2px solid #c9ccd0;box-sizing:border-box;background:#fff"></div>
<div style="position:absolute;left:620px;top:675px;width:28px;height:28px;border:2.5px solid #8a8e93;border-radius:3px;box-sizing:border-box;background:#fff"></div>
<div class="t" style="left:656.0px;top:682.2px;font-size:21.5px;color:#111418;font-weight:normal;letter-spacing:0px;transform:scaleX(1.0270);transform-origin:0 0;">Any</div>
<div style="position:absolute;left:612px;top:710px;width:520px;height:2px;background:#c9ccd0"></div>
<div style="position:absolute;left:612px;top:712px;width:520px;height:46px;background:#eceeef"></div>
<div style="position:absolute;left:612px;top:758px;width:520px;height:2px;background:#c9ccd0"></div>
<div style="position:absolute;left:1130px;top:712px;width:2px;height:46px;background:#a9adb1"></div>
<div style="position:absolute;left:624px;top:720px;width:27px;height:27px;border:3px solid #4b8dc2;border-radius:3px;box-sizing:border-box;background:#fff"></div>
<div style="position:absolute;left:666px;top:712px;width:2px;height:46px;background:#a9adb1"></div>
<div class="t" style="left:678.0px;top:726.0px;font-size:19.5px;color:#2a2e33;font-weight:bold;letter-spacing:2px;transform:scaleX(0.9080);transform-origin:0 0;">SOURCE ZONE</div>
<svg style="position:absolute;left:844px;top:730px" width="19" height="10" viewBox="0 0 19 10"><path d="M1.5 9 L9.5 1.5 L17.5 9" stroke="#9ea2a6" stroke-width="2.5" fill="none"/></svg>
<div style="position:absolute;left:624px;top:769px;width:27px;height:27px;border:3px solid #98c3e4;border-radius:3px;box-sizing:border-box;background:#fff"></div>
<div style="position:absolute;left:666px;top:760px;width:1px;height:56px;background:#e3e5e7"></div>
<div style="position:absolute;left:612px;top:816px;width:520px;height:2px;background:#e8eaec"></div>
<div style="position:absolute;left:612px;top:1084px;width:520px;height:2px;background:#c9ccd0"></div>
<div style="position:absolute;left:612px;top:1086px;width:520px;height:52px;background:#f4f6f6"></div>
<svg style="position:absolute;left:624px;top:1100px" width="30" height="30" viewBox="0 0 30 30"><circle cx="15" cy="15" r="13.5" stroke="#3d7aa8" stroke-width="2.2" fill="none"/><path d="M15 8 V22 M8 15 H22" stroke="#3d7aa8" stroke-width="2.2"/></svg>
<div class="t" style="left:660.0px;top:1102.8px;font-size:24.5px;color:#1f2226;font-weight:normal;letter-spacing:0px;transform:scaleX(0.9885);transform-origin:0 0;">Add</div>
<svg style="position:absolute;left:729px;top:1100px" width="30" height="30" viewBox="0 0 30 30"><circle cx="15" cy="15" r="13.5" stroke="#e9b9bd" stroke-width="2.2" fill="none"/><path d="M8 15 H22" stroke="#e9b9bd" stroke-width="2.2"/></svg>
<div class="t" style="left:766.0px;top:1102.8px;font-size:24.5px;color:#a9adb1;font-weight:normal;letter-spacing:0px;transform:scaleX(0.9795);transform-origin:0 0;">Delete</div>
<svg style="position:absolute;left:680px;top:779px" width="28" height="21" viewBox="0 0 28 21"><path d="M0 12 V3 Q0 0 3 0 H25 Q28 0 28 3 V12 Z" fill="#12171e"/><g fill="#e0b830"><path d="M1.5 1.8 H6 L1.5 6.5 Z"/><path d="M11 1.8 H17 L12 10.3 H4.5 Z"/><path d="M21 1.8 H26.5 L22 10.3 H14 Z"/></g><rect x="0" y="11" width="2.6" height="9.5" rx="1.3" fill="#3a3e44"/><rect x="25.4" y="11" width="2.6" height="9.5" rx="1.3" fill="#3a3e44"/></svg>
<div class="t" style="left:716.0px;top:775.3px;font-size:21.5px;color:#2a6cc0;font-weight:normal;letter-spacing:0px;transform:scaleX(0.9778);transform-origin:0 0;">inside</div>
<div style="position:absolute;left:1140px;top:663px;width:523px;height:477px;border:2px solid #c9ccd0;box-sizing:border-box;background:#fff"></div>
<div style="position:absolute;left:1150px;top:675px;width:28px;height:28px;border:2.5px solid #8a8e93;border-radius:3px;box-sizing:border-box;background:#fff"></div>
<div class="t" style="left:1186.0px;top:682.2px;font-size:21.5px;color:#111418;font-weight:normal;letter-spacing:0px;transform:scaleX(1.0270);transform-origin:0 0;">Any</div>
<div style="position:absolute;left:1142px;top:710px;width:519px;height:2px;background:#c9ccd0"></div>
<div style="position:absolute;left:1142px;top:712px;width:519px;height:46px;background:#eceeef"></div>
<div style="position:absolute;left:1142px;top:758px;width:519px;height:2px;background:#c9ccd0"></div>
<div style="position:absolute;left:1659px;top:712px;width:2px;height:46px;background:#a9adb1"></div>
<div style="position:absolute;left:1154px;top:720px;width:27px;height:27px;border:3px solid #4b8dc2;border-radius:3px;box-sizing:border-box;background:#fff"></div>
<div style="position:absolute;left:1196px;top:712px;width:2px;height:46px;background:#a9adb1"></div>
<div class="t" style="left:1208.0px;top:726.0px;font-size:19.5px;color:#2a2e33;font-weight:bold;letter-spacing:2px;transform:scaleX(0.8864);transform-origin:0 0;">SOURCE ADDRESS</div>
<svg style="position:absolute;left:1411px;top:730px" width="19" height="10" viewBox="0 0 19 10"><path d="M1.5 9 L9.5 1.5 L17.5 9" stroke="#9ea2a6" stroke-width="2.5" fill="none"/></svg>
<div style="position:absolute;left:1154px;top:769px;width:27px;height:27px;border:3px solid #98c3e4;border-radius:3px;box-sizing:border-box;background:#fff"></div>
<div style="position:absolute;left:1196px;top:760px;width:1px;height:56px;background:#e3e5e7"></div>
<div style="position:absolute;left:1142px;top:816px;width:519px;height:2px;background:#e8eaec"></div>
<div style="position:absolute;left:1142px;top:1084px;width:519px;height:2px;background:#c9ccd0"></div>
<div style="position:absolute;left:1142px;top:1086px;width:519px;height:52px;background:#f4f6f6"></div>
<svg style="position:absolute;left:1154px;top:1100px" width="30" height="30" viewBox="0 0 30 30"><circle cx="15" cy="15" r="13.5" stroke="#3d7aa8" stroke-width="2.2" fill="none"/><path d="M15 8 V22 M8 15 H22" stroke="#3d7aa8" stroke-width="2.2"/></svg>
<div class="t" style="left:1190.0px;top:1102.8px;font-size:24.5px;color:#1f2226;font-weight:normal;letter-spacing:0px;transform:scaleX(0.9885);transform-origin:0 0;">Add</div>
<svg style="position:absolute;left:1259px;top:1100px" width="30" height="30" viewBox="0 0 30 30"><circle cx="15" cy="15" r="13.5" stroke="#e9b9bd" stroke-width="2.2" fill="none"/><path d="M8 15 H22" stroke="#e9b9bd" stroke-width="2.2"/></svg>
<div class="t" style="left:1296.0px;top:1102.8px;font-size:24.5px;color:#a9adb1;font-weight:normal;letter-spacing:0px;transform:scaleX(0.9795);transform-origin:0 0;">Delete</div>
<svg style="position:absolute;left:1208px;top:773px" width="33" height="32" viewBox="0 0 33 32"><path d="M1 21 V1 H14.5 L16.5 4.5 H25.5 Q27.5 4.5 27.5 6.5 V13" stroke="#c8962a" stroke-width="2" fill="none"/><rect x="6" y="10" width="21" height="13" rx="2.5" stroke="#4a90c0" stroke-width="2" fill="#fff"/><rect x="10.5" y="14.5" width="21" height="13" rx="2.5" stroke="#4a90c0" stroke-width="2" fill="#fff"/><path d="M15.5 23.5 H30.5 M21 27.5 V30.5 M16 31 H26" stroke="#4a90c0" stroke-width="2"/></svg>
<div class="t" style="left:1246.3px;top:775.3px;font-size:21.5px;color:#2a6cc0;font-weight:normal;letter-spacing:0px;transform:scaleX(1.0100);transform-origin:0 0;">trustsec</div>
<div style="position:absolute;left:1670px;top:663px;width:524px;height:476px;border:2px solid #c9ccd0;box-sizing:border-box;background:#fff"></div>
<div style="position:absolute;left:1679px;top:668px;width:285px;height:39px;border:2px solid #c4c7cb;border-radius:5px;box-sizing:border-box;background:#fff"></div>
<div class="t" style="left:1688.0px;top:674.4px;font-size:22px;color:#15181c;font-weight:normal;letter-spacing:0px;transform:scaleX(0.9408);transform-origin:0 0;">any</div>
<svg style="position:absolute;left:1930px;top:682px" width="19" height="11" viewBox="0 0 19 11"><path d="M1.5 1.5 L9.5 9.5 L17.5 1.5" stroke="#8a8e93" stroke-width="2.2" fill="none"/></svg>
<div style="position:absolute;left:1672px;top:709px;width:520px;height:2px;background:#c9ccd0"></div>
<div style="position:absolute;left:1672px;top:711px;width:520px;height:63px;background:#eceeef"></div>
<div style="position:absolute;left:1672px;top:774px;width:520px;height:2px;background:#c9ccd0"></div>
<div style="position:absolute;left:1684px;top:735px;width:27px;height:28px;border:3px solid #4b8dc2;border-radius:3px;box-sizing:border-box;background:#fff"></div>
<div style="position:absolute;left:1726px;top:711px;width:2px;height:63px;background:#a9adb1"></div>
<div style="position:absolute;left:1926px;top:711px;width:2px;height:63px;background:#a9adb1"></div>
<div class="t" style="left:1738.0px;top:724.0px;font-size:19.5px;color:#2a2e33;font-weight:bold;letter-spacing:2px;transform:scaleX(0.8865);transform-origin:0 0;">SOURCE USER</div>
<svg style="position:absolute;left:1754px;top:749px" width="19" height="10" viewBox="0 0 19 10"><path d="M1.5 9 L9.5 1.5 L17.5 9" stroke="#9ea2a6" stroke-width="2.5" fill="none"/></svg>
<div style="position:absolute;left:1672px;top:1083px;width:520px;height:2px;background:#c9ccd0"></div>
<div style="position:absolute;left:1672px;top:1085px;width:520px;height:52px;background:#f4f6f6"></div>
<svg style="position:absolute;left:1684px;top:1099px" width="30" height="30" viewBox="0 0 30 30"><circle cx="15" cy="15" r="13.5" stroke="#3d7aa8" stroke-width="2.2" fill="none"/><path d="M15 8 V22 M8 15 H22" stroke="#3d7aa8" stroke-width="2.2"/></svg>
<div class="t" style="left:1720.0px;top:1101.8px;font-size:24.5px;color:#1f2226;font-weight:normal;letter-spacing:0px;transform:scaleX(0.9885);transform-origin:0 0;">Add</div>
<svg style="position:absolute;left:1789px;top:1099px" width="30" height="30" viewBox="0 0 30 30"><circle cx="15" cy="15" r="13.5" stroke="#e9b9bd" stroke-width="2.2" fill="none"/><path d="M8 15 H22" stroke="#e9b9bd" stroke-width="2.2"/></svg>
<div class="t" style="left:1826.0px;top:1101.8px;font-size:24.5px;color:#a9adb1;font-weight:normal;letter-spacing:0px;transform:scaleX(0.9795);transform-origin:0 0;">Delete</div>
<div style="position:absolute;left:2200px;top:663px;width:524px;height:476px;border:2px solid #c9ccd0;box-sizing:border-box;background:#fff"></div>
<div style="position:absolute;left:2209px;top:668px;width:285px;height:39px;border:2px solid #c4c7cb;border-radius:5px;box-sizing:border-box;background:#fff"></div>
<div class="t" style="left:2218.0px;top:674.4px;font-size:22px;color:#15181c;font-weight:normal;letter-spacing:0px;transform:scaleX(0.9408);transform-origin:0 0;">any</div>
<svg style="position:absolute;left:2460px;top:682px" width="19" height="11" viewBox="0 0 19 11"><path d="M1.5 1.5 L9.5 9.5 L17.5 1.5" stroke="#8a8e93" stroke-width="2.2" fill="none"/></svg>
<div style="position:absolute;left:2202px;top:709px;width:520px;height:2px;background:#c9ccd0"></div>
<div style="position:absolute;left:2202px;top:711px;width:520px;height:63px;background:#eceeef"></div>
<div style="position:absolute;left:2202px;top:774px;width:520px;height:2px;background:#c9ccd0"></div>
<div style="position:absolute;left:2214px;top:735px;width:27px;height:28px;border:3px solid #4b8dc2;border-radius:3px;box-sizing:border-box;background:#fff"></div>
<div style="position:absolute;left:2256px;top:711px;width:2px;height:63px;background:#a9adb1"></div>
<div style="position:absolute;left:2456px;top:711px;width:2px;height:63px;background:#a9adb1"></div>
<div class="t" style="left:2268.0px;top:724.0px;font-size:19.5px;color:#2a2e33;font-weight:bold;letter-spacing:2px;transform:scaleX(0.9030);transform-origin:0 0;">SOURCE DEVICE</div>
<svg style="position:absolute;left:2284px;top:749px" width="19" height="10" viewBox="0 0 19 10"><path d="M1.5 9 L9.5 1.5 L17.5 9" stroke="#9ea2a6" stroke-width="2.5" fill="none"/></svg>
<div style="position:absolute;left:2202px;top:1083px;width:520px;height:2px;background:#c9ccd0"></div>
<div style="position:absolute;left:2202px;top:1085px;width:520px;height:52px;background:#f4f6f6"></div>
<svg style="position:absolute;left:2214px;top:1099px" width="30" height="30" viewBox="0 0 30 30"><circle cx="15" cy="15" r="13.5" stroke="#3d7aa8" stroke-width="2.2" fill="none"/><path d="M15 8 V22 M8 15 H22" stroke="#3d7aa8" stroke-width="2.2"/></svg>
<div class="t" style="left:2250.0px;top:1101.8px;font-size:24.5px;color:#1f2226;font-weight:normal;letter-spacing:0px;transform:scaleX(0.9885);transform-origin:0 0;">Add</div>
<svg style="position:absolute;left:2319px;top:1099px" width="30" height="30" viewBox="0 0 30 30"><circle cx="15" cy="15" r="13.5" stroke="#e9b9bd" stroke-width="2.2" fill="none"/><path d="M8 15 H22" stroke="#e9b9bd" stroke-width="2.2"/></svg>
<div class="t" style="left:2356.0px;top:1101.8px;font-size:24.5px;color:#a9adb1;font-weight:normal;letter-spacing:0px;transform:scaleX(0.9795);transform-origin:0 0;">Delete</div>
<div style="position:absolute;left:1142px;top:1154px;width:28px;height:28px;border:2.5px solid #8a8e93;border-radius:3px;box-sizing:border-box;background:#fff"></div>
<div class="t" style="left:1178.7px;top:1156.4px;font-size:22px;color:#1f2329;font-weight:normal;letter-spacing:0px;transform:scaleX(0.9620);transform-origin:0 0;">Negate</div>
<div style="position:absolute;left:2416px;top:1241px;width:153px;height:59px;background:#4a9fe0;border:3px solid #0f3a5a;border-radius:30px;box-sizing:border-box"></div>
<div class="t" style="left:2477.6px;top:1258.4px;font-size:22px;color:#fff;font-weight:normal;letter-spacing:0px;transform:scaleX(0.9764);transform-origin:0 0;">OK</div>
<div style="position:absolute;left:2580px;top:1244px;width:150px;height:55px;background:#fff;border:2px solid #c8cbce;border-radius:28px;box-sizing:border-box"></div>
<div class="t" style="left:2623.0px;top:1258.4px;font-size:22px;color:#22262c;font-weight:normal;letter-spacing:0px;transform:scaleX(0.9270);transform-origin:0 0;">Cancel</div>
</body></html>
